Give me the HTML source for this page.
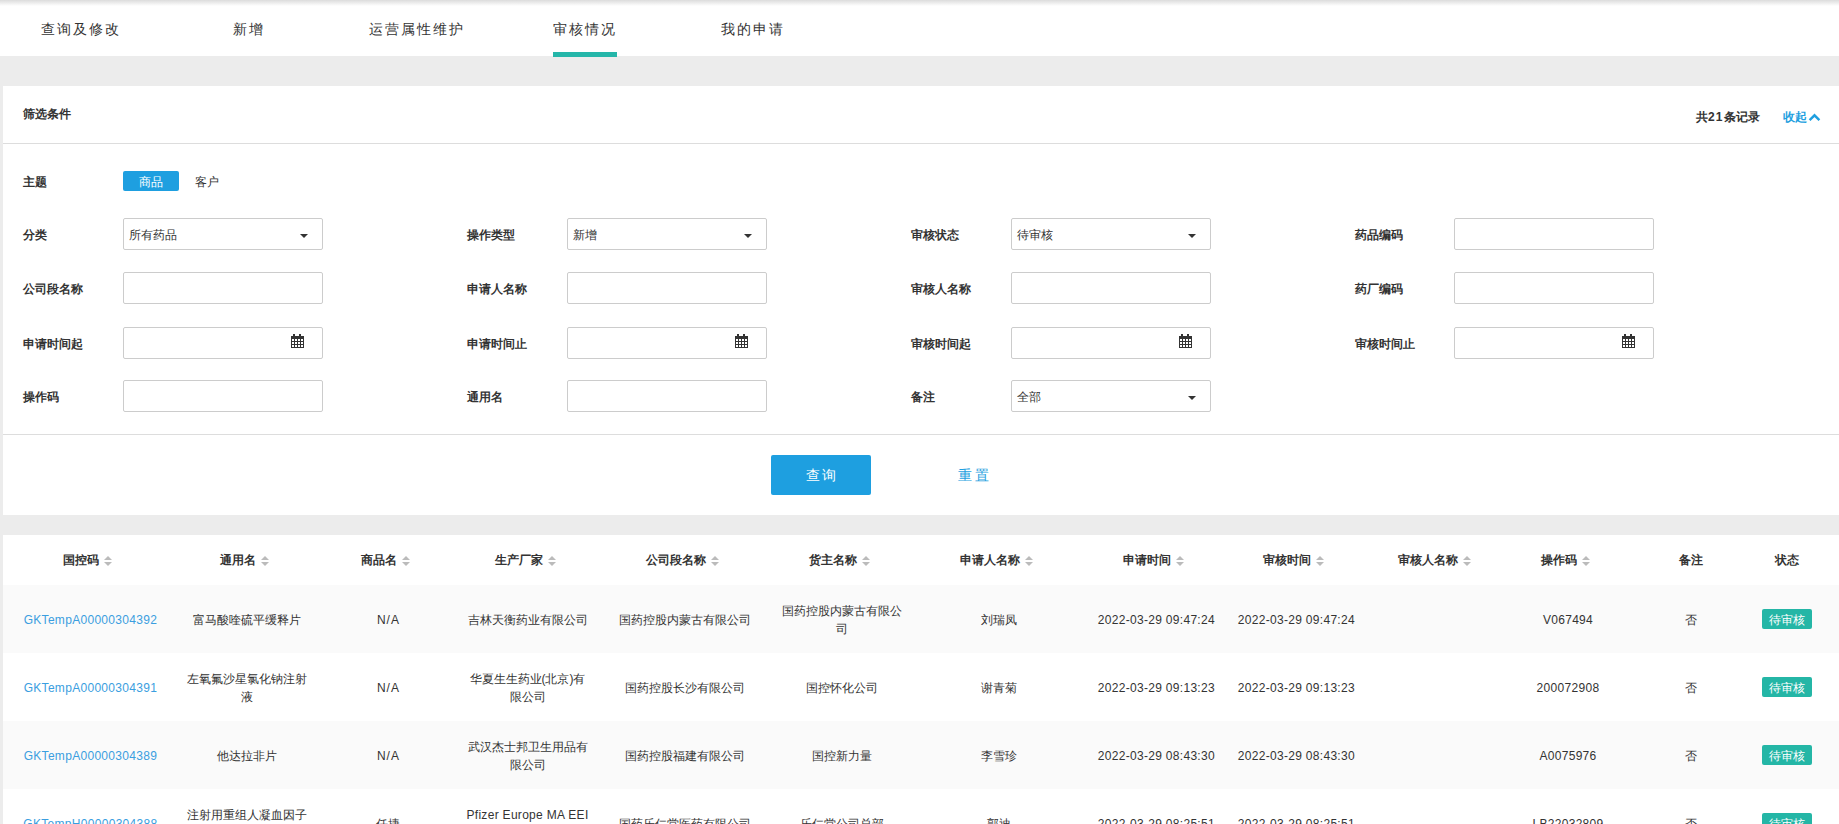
<!DOCTYPE html>
<html><head><meta charset="utf-8">
<style>
*{box-sizing:border-box;margin:0;padding:0}
html,body{width:1839px;height:824px;overflow:hidden}
body{background:#ececec;font-family:"Liberation Sans",sans-serif;font-size:12px;color:#333;position:relative}
.tabs{position:absolute;left:0;top:0;width:1839px;height:56px;background:#fff;z-index:1}
.tabs .shadow{position:absolute;left:0;top:0;width:100%;height:6px;background:linear-gradient(#dcdcdc,#fff)}
.tab{position:absolute;top:19px;font-size:14px;letter-spacing:2px;color:#333;line-height:20px;white-space:nowrap}
.tab.active{color:#333}
.uline{position:absolute;left:553px;top:52px;width:64px;height:5px;background:#25b6a9;z-index:2}
.panel{position:absolute;left:3px;width:1836px;background:#fff}
.p1{top:86px;height:429px}
.p2{top:535px;height:289px}
.hline{position:absolute;left:0;width:100%;height:1px;background:#dddddd}
.abs{position:absolute;white-space:nowrap;line-height:16px}
.lbl{font-weight:bold;color:#333}
.inp{position:absolute;width:200px;height:32px;border:1px solid #ccc;border-radius:2px;background:#fff}
.inp .v{position:absolute;left:5px;top:9px;line-height:14px;color:#333;font-weight:500}
.caret{position:absolute;right:14px;top:15px;width:0;height:0;border-left:4px solid transparent;border-right:4px solid transparent;border-top:4px solid #333}
.cal{position:absolute;left:167px;top:6px}
.btn{position:absolute;background:#1e9fe0;color:#fff;border-radius:2px;text-align:center}
.thead{position:absolute;left:0;top:0;width:100%;height:50px;background:#fff}
.th{position:absolute;top:0;width:200px;height:50px;display:flex;align-items:center;justify-content:center;font-weight:bold;color:#333;white-space:nowrap;line-height:16px}
.sort{display:inline-block;position:relative;width:13px;height:12px;margin-left:5px}
.sort:before{content:"";position:absolute;left:0;top:2px;border-left:4px solid transparent;border-right:4px solid transparent;border-bottom:4px solid #bbb}
.sort:after{content:"";position:absolute;left:0;top:8px;border-left:4px solid transparent;border-right:4px solid transparent;border-top:4px solid #bbb}
.tr{position:absolute;left:0;width:100%;height:68px;background:#fff}
.tr.odd{background:#fafafa}
.td{position:absolute;width:200px;height:68px;padding-top:2px;display:flex;align-items:center;justify-content:center;text-align:center;line-height:18px;white-space:nowrap;color:#333;font-weight:500}
.en{letter-spacing:0.3px}
.na{letter-spacing:1px;text-indent:1px}
.td.link{color:#3a9ee0}
.badge{display:inline-block;position:relative;top:-1px;width:50px;height:20px;padding-top:2px;line-height:19px;background:#24b6a6;color:#fff;border-radius:2px;text-align:center;letter-spacing:0}
</style></head><body>
<div class="tabs"><div class="shadow"></div>
<div class="tab" style="left:41px">查询及修改</div>
<div class="tab" style="left:233px">新增</div>
<div class="tab" style="left:369px">运营属性维护</div>
<div class="tab active" style="left:553px">审核情况</div>
<div class="tab" style="left:721px">我的申请</div>
<div class="uline"></div>
</div>

<div class="panel p1">
  <div class="abs lbl" style="left:20px;top:20px">筛选条件</div>
  <div class="abs lbl" style="left:1693px;top:23px">共<span style="letter-spacing:1.2px">21</span>条记录</div>
  <div class="abs" style="left:1780px;top:23px;color:#1e9fe0;font-weight:bold">收起</div>
  <svg class="abs" style="left:1805px;top:27px" width="13" height="9" viewBox="0 0 13 9"><path d="M1.6 7.2 L6.5 2.3 L11.4 7.2" fill="none" stroke="#1e9fe0" stroke-width="2.4"/></svg>
  <div class="hline" style="top:57px"></div>

  <div class="abs lbl" style="left:20px;top:88px">主题</div>
  <div class="btn" style="left:120px;top:85px;width:56px;height:20px;line-height:22px;font-weight:500">商品</div>
  <div class="abs" style="left:192px;top:88px;font-weight:500">客户</div>

  <!-- row 2 -->
  <div class="abs lbl" style="left:20px;top:141px">分类</div>
  <div class="inp" style="left:120px;top:132px"><span class="v">所有药品</span><i class="caret"></i></div>
  <div class="abs lbl" style="left:464px;top:141px">操作类型</div>
  <div class="inp" style="left:564px;top:132px"><span class="v">新增</span><i class="caret"></i></div>
  <div class="abs lbl" style="left:908px;top:141px">审核状态</div>
  <div class="inp" style="left:1008px;top:132px"><span class="v">待审核</span><i class="caret"></i></div>
  <div class="abs lbl" style="left:1352px;top:141px">药品编码</div>
  <div class="inp" style="left:1451px;top:132px"></div>

  <!-- row 3 -->
  <div class="abs lbl" style="left:20px;top:195px">公司段名称</div>
  <div class="inp" style="left:120px;top:186px"></div>
  <div class="abs lbl" style="left:464px;top:195px">申请人名称</div>
  <div class="inp" style="left:564px;top:186px"></div>
  <div class="abs lbl" style="left:908px;top:195px">审核人名称</div>
  <div class="inp" style="left:1008px;top:186px"></div>
  <div class="abs lbl" style="left:1352px;top:195px">药厂编码</div>
  <div class="inp" style="left:1451px;top:186px"></div>

  <!-- row 4 -->
  <div class="abs lbl" style="left:20px;top:250px">申请时间起</div>
  <div class="inp" style="left:120px;top:241px"><svg class="cal" width="13" height="14" viewBox="0 0 13 14" shape-rendering="crispEdges"><path fill="#333" fill-rule="evenodd" d="M0 2h13v12h-13zM1 5h2v2h-2zM1 8h2v2h-2zM1 11h2v2h-2zM4 5h2v2h-2zM4 8h2v2h-2zM4 11h2v2h-2zM7 5h2v2h-2zM7 8h2v2h-2zM7 11h2v2h-2zM10 5h2v2h-2zM10 8h2v2h-2zM10 11h2v2h-2z"/><path fill="#333" d="M2 0h2v3h-2zM8 0h2v3h-2z"/></svg></div>
  <div class="abs lbl" style="left:464px;top:250px">申请时间止</div>
  <div class="inp" style="left:564px;top:241px"><svg class="cal" width="13" height="14" viewBox="0 0 13 14" shape-rendering="crispEdges"><path fill="#333" fill-rule="evenodd" d="M0 2h13v12h-13zM1 5h2v2h-2zM1 8h2v2h-2zM1 11h2v2h-2zM4 5h2v2h-2zM4 8h2v2h-2zM4 11h2v2h-2zM7 5h2v2h-2zM7 8h2v2h-2zM7 11h2v2h-2zM10 5h2v2h-2zM10 8h2v2h-2zM10 11h2v2h-2z"/><path fill="#333" d="M2 0h2v3h-2zM8 0h2v3h-2z"/></svg></div>
  <div class="abs lbl" style="left:908px;top:250px">审核时间起</div>
  <div class="inp" style="left:1008px;top:241px"><svg class="cal" width="13" height="14" viewBox="0 0 13 14" shape-rendering="crispEdges"><path fill="#333" fill-rule="evenodd" d="M0 2h13v12h-13zM1 5h2v2h-2zM1 8h2v2h-2zM1 11h2v2h-2zM4 5h2v2h-2zM4 8h2v2h-2zM4 11h2v2h-2zM7 5h2v2h-2zM7 8h2v2h-2zM7 11h2v2h-2zM10 5h2v2h-2zM10 8h2v2h-2zM10 11h2v2h-2z"/><path fill="#333" d="M2 0h2v3h-2zM8 0h2v3h-2z"/></svg></div>
  <div class="abs lbl" style="left:1352px;top:250px">审核时间止</div>
  <div class="inp" style="left:1451px;top:241px"><svg class="cal" width="13" height="14" viewBox="0 0 13 14" shape-rendering="crispEdges"><path fill="#333" fill-rule="evenodd" d="M0 2h13v12h-13zM1 5h2v2h-2zM1 8h2v2h-2zM1 11h2v2h-2zM4 5h2v2h-2zM4 8h2v2h-2zM4 11h2v2h-2zM7 5h2v2h-2zM7 8h2v2h-2zM7 11h2v2h-2zM10 5h2v2h-2zM10 8h2v2h-2zM10 11h2v2h-2z"/><path fill="#333" d="M2 0h2v3h-2zM8 0h2v3h-2z"/></svg></div>

  <!-- row 5 -->
  <div class="abs lbl" style="left:20px;top:303px">操作码</div>
  <div class="inp" style="left:120px;top:294px"></div>
  <div class="abs lbl" style="left:464px;top:303px">通用名</div>
  <div class="inp" style="left:564px;top:294px"></div>
  <div class="abs lbl" style="left:908px;top:303px">备注</div>
  <div class="inp" style="left:1008px;top:294px"><span class="v">全部</span><i class="caret"></i></div>

  <div class="hline" style="top:348px"></div>
  <div class="btn" style="left:768px;top:369px;width:100px;height:40px;line-height:40px;font-size:14px;letter-spacing:2px;text-indent:2px">查询</div>
  <div class="abs" style="left:955px;top:381px;font-size:14px;letter-spacing:3px;color:#1e9fe0">重置</div>
</div>

<div class="panel p2">
<div class="thead"></div>
<div class="th" style="left:-12.6px">国控码<i class="sort"></i></div>
<div class="th" style="left:144.4px">通用名<i class="sort"></i></div>
<div class="th" style="left:284.9px">商品名<i class="sort"></i></div>
<div class="th" style="left:424.5px">生产厂家<i class="sort"></i></div>
<div class="th" style="left:581.6px">公司段名称<i class="sort"></i></div>
<div class="th" style="left:739.1px">货主名称<i class="sort"></i></div>
<div class="th" style="left:896.3px">申请人名称<i class="sort"></i></div>
<div class="th" style="left:1053.4px">申请时间<i class="sort"></i></div>
<div class="th" style="left:1193.4px">审核时间<i class="sort"></i></div>
<div class="th" style="left:1334.4px">审核人名称<i class="sort"></i></div>
<div class="th" style="left:1465.0px">操作码<i class="sort"></i></div>
<div class="th" style="left:1588.0px">备注</div>
<div class="th" style="left:1684.0px">状态</div>
<div class="tr odd" style="top:50px"></div>
<div class="td link en" style="left:-12.6px;top:50px">GKTempA00000304392</div>
<div class="td" style="left:144.4px;top:50px">富马酸喹硫平缓释片</div>
<div class="td en na" style="left:284.9px;top:50px">N/A</div>
<div class="td" style="left:424.5px;top:50px">吉林天衡药业有限公司</div>
<div class="td" style="left:581.6px;top:50px">国药控股内蒙古有限公司</div>
<div class="td" style="left:739.1px;top:50px">国药控股内蒙古有限公<br>司</div>
<div class="td" style="left:896.3px;top:50px">刘瑞凤</div>
<div class="td en" style="left:1053.4px;top:50px">2022-03-29 09:47:24</div>
<div class="td en" style="left:1193.4px;top:50px">2022-03-29 09:47:24</div>
<div class="td" style="left:1334.4px;top:50px"></div>
<div class="td en" style="left:1465.0px;top:50px">V067494</div>
<div class="td" style="left:1588.0px;top:50px">否</div>
<div class="td" style="left:1684.0px;top:50px"><span class="badge">待审核</span></div>
<div class="tr" style="top:118px"></div>
<div class="td link en" style="left:-12.6px;top:118px">GKTempA00000304391</div>
<div class="td" style="left:144.4px;top:118px">左氧氟沙星氯化钠注射<br>液</div>
<div class="td en na" style="left:284.9px;top:118px">N/A</div>
<div class="td" style="left:424.5px;top:118px">华夏生生药业(北京)有<br>限公司</div>
<div class="td" style="left:581.6px;top:118px">国药控股长沙有限公司</div>
<div class="td" style="left:739.1px;top:118px">国控怀化公司</div>
<div class="td" style="left:896.3px;top:118px">谢青菊</div>
<div class="td en" style="left:1053.4px;top:118px">2022-03-29 09:13:23</div>
<div class="td en" style="left:1193.4px;top:118px">2022-03-29 09:13:23</div>
<div class="td" style="left:1334.4px;top:118px"></div>
<div class="td en" style="left:1465.0px;top:118px">200072908</div>
<div class="td" style="left:1588.0px;top:118px">否</div>
<div class="td" style="left:1684.0px;top:118px"><span class="badge">待审核</span></div>
<div class="tr odd" style="top:186px"></div>
<div class="td link en" style="left:-12.6px;top:186px">GKTempA00000304389</div>
<div class="td" style="left:144.4px;top:186px">他达拉非片</div>
<div class="td en na" style="left:284.9px;top:186px">N/A</div>
<div class="td" style="left:424.5px;top:186px">武汉杰士邦卫生用品有<br>限公司</div>
<div class="td" style="left:581.6px;top:186px">国药控股福建有限公司</div>
<div class="td" style="left:739.1px;top:186px">国控新力量</div>
<div class="td" style="left:896.3px;top:186px">李雪珍</div>
<div class="td en" style="left:1053.4px;top:186px">2022-03-29 08:43:30</div>
<div class="td en" style="left:1193.4px;top:186px">2022-03-29 08:43:30</div>
<div class="td" style="left:1334.4px;top:186px"></div>
<div class="td en" style="left:1465.0px;top:186px">A0075976</div>
<div class="td" style="left:1588.0px;top:186px">否</div>
<div class="td" style="left:1684.0px;top:186px"><span class="badge">待审核</span></div>
<div class="tr" style="top:254px"></div>
<div class="td link en" style="left:-12.6px;top:254px">GKTempH00000304388</div>
<div class="td" style="left:144.4px;top:254px">注射用重组人凝血因子<br>Ⅷ</div>
<div class="td" style="left:284.9px;top:254px">任捷</div>
<div class="td en" style="left:424.5px;top:254px">Pfizer Europe MA EEI<br>G</div>
<div class="td" style="left:581.6px;top:254px">国药乐仁堂医药有限公司</div>
<div class="td" style="left:739.1px;top:254px">乐仁堂公司总部</div>
<div class="td" style="left:896.3px;top:254px">郭迪</div>
<div class="td en" style="left:1053.4px;top:254px">2022-03-29 08:25:51</div>
<div class="td en" style="left:1193.4px;top:254px">2022-03-29 08:25:51</div>
<div class="td" style="left:1334.4px;top:254px"></div>
<div class="td en" style="left:1465.0px;top:254px">LB22032809</div>
<div class="td" style="left:1588.0px;top:254px">否</div>
<div class="td" style="left:1684.0px;top:254px"><span class="badge">待审核</span></div>
</div>
</body></html>
